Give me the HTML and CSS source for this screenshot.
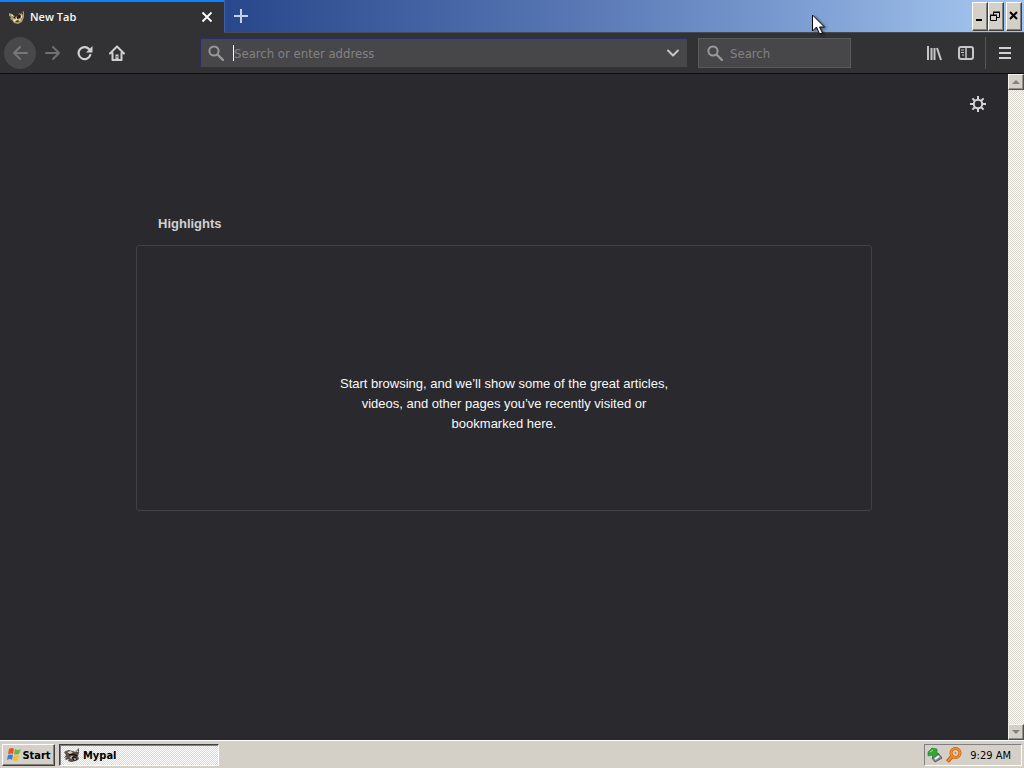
FILE: index.html
```html
<!DOCTYPE html>
<html lang="en">
<head>
<meta charset="utf-8">
<title>New Tab</title>
<link rel="stylesheet" href="styles.css">
</head>
<body>
<div class="desktop">
  <header class="titlebar">
    <div class="tab">
      <svg class="icon16" viewBox="0 0 16 16"><path fill="#b09a68" d="M0 4l3 1 3 3 3-1 1-3 2 1 2-3 1 1v5l-2 5-4 2-4-1-2-3-2-1 1-2-2-1z"/><path fill="#1d1c1a" d="M3 7l3 1 1 2-2-1zM8 8l2-3 2 2-1 2-3 1zM6 12l2-1 3 1-3 1zM13 4l1-1v3z"/><path fill="#fff0c8" d="M4 10l2 1 1-2 2 2 3-1-1 2-2-1-3 1-1 1zM2 5l2 1 1 2-2-1zM12 7l1-1v2l-1 1z"/></svg>
      <span class="tab-label">New Tab</span>
      <button class="tab-close" aria-label="Close tab"><svg class="icon16" viewBox="0 0 16 16"><path d="M3.500 3.500l9 9m0-9l-9 9" stroke="#fff" stroke-width="1.800" fill="none"/></svg></button>
    </div>
    <button class="new-tab" aria-label="Open a new tab"><svg class="icon16" viewBox="0 0 16 16"><path d="M8 1v14M1 8h14" stroke="#c2d2ee" stroke-width="2"/></svg></button>
    <div class="window-buttons">
      <button class="win-btn" aria-label="Minimize"><svg viewBox="0 0 12 12"><path d="M2 9h6" stroke="#000" stroke-width="2"/></svg></button>
      <button class="win-btn" aria-label="Restore"><svg viewBox="0 0 12 12"><path d="M3.500 4V1.500h6v5H7M3 1h7M.5 4.500h6v5h-6zM0 4h7" fill="none" stroke="#000"/></svg></button>
      <button class="win-btn win-close" aria-label="Close"><svg viewBox="0 0 12 12"><path d="M2 1l7 7m0-7L2 8" stroke="#000" stroke-width="2"/></svg></button>
    </div>
  </header>
  <nav class="toolbar">
    <div class="nav-buttons">
      <button class="tool back" aria-label="Back"><svg class="icon16" viewBox="0 0 16 16"><path d="M15 8H2m6-6L2 8l6 6" fill="none" stroke="#77777a" stroke-width="2" stroke-linecap="round" stroke-linejoin="round"/></svg></button>
      <button class="tool" aria-label="Forward"><svg class="icon16" viewBox="0 0 16 16"><path d="M1 8h13M8 2l6 6-6 6" fill="none" stroke="#707073" stroke-width="2" stroke-linecap="round" stroke-linejoin="round"/></svg></button>
      <button class="tool" aria-label="Reload"><svg class="icon16" viewBox="0 0 16 16"><path d="M13.300 10A6 6 0 1 1 12 4" fill="none" stroke="#d0d0d2" stroke-width="2.200" stroke-linecap="round"/><path d="M15.500 1v6.500H9z" fill="#d0d0d2"/></svg></button>
      <button class="tool" aria-label="Home"><svg class="icon16" viewBox="0 0 16 16"><path d="M1 8.500l7-7 7 7M3.500 8v7h9V8" fill="none" stroke="#d0d0d2" stroke-width="2" stroke-linecap="round" stroke-linejoin="round"/><path d="M6.500 15V9.500h3V15z" fill="#d0d0d2"/><path d="M8 11v1.500" stroke="#323234"/></svg></button>
    </div>
    <div class="field address">
      <svg class="icon16" viewBox="0 0 16 16"><circle cx="6" cy="6" r="4.600" fill="none" stroke="#98989a" stroke-width="2"/><path d="M9.500 9.500l5.500 5.500" stroke="#98989a" stroke-width="2.400" stroke-linecap="round"/></svg>
      <span class="caret"></span>
      <input type="text" placeholder="Search or enter address" aria-label="Search or enter address">
      <button class="drop" aria-label="Show history"><svg class="icon16" viewBox="0 0 16 16"><path d="M3 5.500l5 5 5-5" fill="none" stroke="#c6c6c8" stroke-width="2" stroke-linecap="round" stroke-linejoin="round"/></svg></button>
    </div>
    <div class="field search">
      <svg class="icon16" viewBox="0 0 16 16"><circle cx="6" cy="6" r="4.600" fill="none" stroke="#98989a" stroke-width="2"/><path d="M9.500 9.500l5.500 5.500" stroke="#98989a" stroke-width="2.400" stroke-linecap="round"/></svg>
      <input type="text" placeholder="Search" aria-label="Search">
    </div>
    <div class="end-buttons">
      <button class="tool" aria-label="Library"><svg class="icon16" viewBox="0 0 16 16"><path d="M2 1v14M5.500 3v12M8.500 3v12M11 3l4 12" fill="none" stroke="#c6c6c8" stroke-width="2"/></svg></button>
      <button class="tool" aria-label="Sidebars"><svg class="icon16" viewBox="0 0 16 16"><rect x="1" y="2" width="14" height="12" rx="2" fill="none" stroke="#c6c6c8" stroke-width="2"/><path d="M8 2v12" stroke="#c6c6c8" stroke-width="1.500"/><path d="M3 5h3M3 7.500h3M4 10h2" stroke="#c6c6c8"/></svg></button>
      <span class="divider"></span>
      <button class="tool" aria-label="Open menu"><svg class="icon16" viewBox="0 0 16 16"><path d="M2 3h12M2 8h12M2 13h12" stroke="#d0d0d2" stroke-width="2"/></svg></button>
    </div>
  </nav>
  <div class="viewport">
    <main class="page">
      <button class="settings" aria-label="Customize your New Tab page"><svg class="icon16" viewBox="0 0 16 16"><circle cx="8" cy="8" r="4.200" fill="none" stroke="#d4d4d7" stroke-width="2"/><path d="M8 0v4M8 12v4M0 8h4M12 8h4M2.400 2.400l2.600 2.600M11 11l2.600 2.600M2.400 13.600L5 11M11 5l2.600-2.600" stroke="#d4d4d7" stroke-width="2"/></svg></button>
      <section class="highlights">
        <h1>Highlights</h1>
        <div class="empty"><p>Start browsing, and we’ll show some of the great articles, videos, and other pages you’ve recently visited or bookmarked here.</p></div>
      </section>
    </main>
    <div class="scrollbar">
      <button class="scroll-btn" aria-label="Scroll up"><svg viewBox="0 0 10 10"><path d="M1 7l4-4 4 4z" fill="#858178"/></svg></button>
      <button class="scroll-btn" aria-label="Scroll down"><svg viewBox="0 0 10 10"><path d="M1 3h8L5 7z" fill="#858178"/></svg></button>
    </div>
  </div>
  <footer class="taskbar">
    <button class="start"><svg class="icon16" viewBox="0 0 16 16"><path d="M3 2q3-2 5 0L7 7q-2-1-5 0z" fill="#e4572c"/><path d="M9 2q3 2 6 0l-2 5q-3 1-5 0z" fill="#72b73c"/><path d="M2 8q3-1 5 0l-1 5q-2-2-5 0z" fill="#3e7bd6"/><path d="M8 8q3 1 5 0l-1 5q-3 2-5 0z" fill="#f3c12d"/></svg>Start</button>
    <button class="task"><svg class="icon16" viewBox="0 0 16 16"><path fill="#5a5048" d="M0 5l4-2 5 1 2 1 4-4v5l-1 3 1 3-3 2-5 1-3-1 1-2-3 1-1-1 2-2-3 1 2-3z"/><path fill="#d9cfc0" d="M3 5l4-1 2 2-3 1zM6 10l2-1 1 1-2 2zM12 5l2-2v2z"/><path d="M5 8l4-1 4 2M8 11l2-1 2 1M9 13l4-1" fill="none" stroke="#1b1714" stroke-width="1.500"/><path d="M10 12h2" stroke="#fff"/></svg>Mypal</button>
    <div class="tray">
      <svg class="icon16" viewBox="0 0 16 16"><path d="M5 11l6-5 4 5-7 4z" fill="#8b9096" stroke="#55595c"/><path d="M8 12l4-3" stroke="#f5f5f5" stroke-width="2"/><path d="M1 5l4-4 5 1v4l2 1-6 4-1-3-4 1z" fill="#35a635" stroke="#168020" stroke-width=".6"/><path d="M3 5l3-2" stroke="#a0e391"/></svg>
      <svg class="icon16 orange" viewBox="0 0 16 16"><circle cx="9.500" cy="6" r="4.500" fill="none" stroke="#b75512" stroke-width="3"/><path d="M6 9.500L1.500 14.500" stroke="#b75512" stroke-width="4"/><circle cx="9.500" cy="6" r="4.500" fill="none" stroke="#f58a24" stroke-width="2"/><path d="M6 9.500L2 14" stroke="#f58a24" stroke-width="2.200"/><circle cx="9.500" cy="6" r="1" fill="#e57b21"/></svg>
      <time>9:29 AM</time>
    </div>
  </footer>
  <svg class="cursor" viewBox="0 0 13 21"><path d="M.5 1v16l4-4 3 7 3-1-3-6h5z" fill="#fff" stroke="#000"/></svg>
</div>
</body>
</html>
```
FILE: styles.css
```css
* { box-sizing: border-box; }
body { margin: 0; }
button { font: inherit; padding: 0; border: 0; background: none; color: inherit; display: flex; align-items: center; justify-content: center; }
svg { display: block; flex: none; }
.icon16 { width: 16px; height: 16px; }
.desktop { min-height: 100vh; display: flex; flex-direction: column; background: #2a2a2e; font-family: "DejaVu Sans Condensed", "DejaVu Sans", sans-serif; font-size: 11px; position: relative; }
.titlebar { height: 33px; display: flex; background: linear-gradient(90deg, #1b3a80 0%, #2b4a8e 24%, #5675b2 55%, #7899cf 76%, #9cbee8 94%, #a3c5f2 100%); border-bottom: 1px solid #454a55; }
.tab { width: 224px; height: 33px; border-top: 2px solid #0a84ff; background: #323234; display: flex; align-items: center; padding: 0 9px 2px; color: #f9f9fa; }
.tab-label { font-family: "Open Sans", "Noto Sans", sans-serif; font-weight: 600; margin-left: 5px; flex: 1; }
.new-tab { width: 33px; height: 32px; border-left: 1px solid #3e60a8; }
.window-buttons { margin-left: auto; display: flex; padding: 2px 2px 2px 0; }
.win-btn { width: 16px; height: 29px; background: #d4d0c8; border: 1px solid; border-color: #fff #404040 #404040 #fff; box-shadow: inset -1px -1px #808080; }
.win-btn svg { width: 12px; height: 12px; }
.win-close { margin-left: 2px; }
.toolbar { height: 41px; background: #323234; border-bottom: 1px solid #0c0c0d; display: flex; align-items: center; padding: 0 3px 0 4px; }
.nav-buttons { display: flex; width: 196px; flex: none; }
.tool { width: 32px; height: 32px; }
.back { border-radius: 50%; background: #48484b; margin-right: 1px; }
.field { height: 30px; background: #474749; border: 1px solid #5a5a5d; display: flex; align-items: center; padding: 0 7px; font-size: 13px; }
.address { flex: 1; border-color: #2b2d68; margin-right: 10px; padding-right: 6px; }
.search { width: 153px; padding: 0 8px; }
.caret { width: 1px; height: 16px; margin-left: 9px; background: #fff; flex: none; }
.field input { min-width: 0; flex: 1; border: 0; outline: 0; padding: 0; background: none; font: inherit; color: #f9f9fa; }
.search input { margin-left: 7px; }
.field input::placeholder { color: #828285; opacity: 1; }
.end-buttons { display: flex; align-items: center; width: 170px; justify-content: flex-end; }
.divider { width: 1px; height: 32px; background: #555558; margin: 0 3px; }
.viewport { flex: 1; display: flex; }
.page { flex: 1; padding: 14px 14px 24px; font-family: "Liberation Sans", Arial, sans-serif; }
.settings { width: 32px; height: 32px; margin-left: auto; }
.highlights { width: 736px; max-width: 100%; margin: 94px auto 0; }
.highlights h1 { margin: 0; padding-left: 22px; color: #d0d0d3; font-size: 13px; line-height: 20px; }
.empty { min-height: 266px; margin-top: 11px; border: 1px solid #414145; border-radius: 3px; display: flex; align-items: center; justify-content: center; padding-top: 52px; color: #f9f9fa; font-size: 13px; line-height: 20px; text-align: center; }
.empty p { margin: 0; max-width: 344px; }
.scrollbar { width: 16px; background: repeating-conic-gradient(#fff 0 25%, #d9d5cd 0 50%) 0 0 / 2px 2px; display: flex; flex-direction: column; justify-content: space-between; }
.scroll-btn { width: 16px; height: 16px; background: #d4d0c8; border: 1px solid; border-color: #f4f2ed #505050 #505050 #f4f2ed; box-shadow: inset -1px -1px #929088; }
.scroll-btn svg { width: 10px; height: 10px; }
.taskbar { height: 28px; border-top: 1px solid #fff; background: #d4d0c8; display: flex; align-items: center; padding: 1px 2px 0; color: #000; }
.start, .task { height: 22px; font-weight: bold; border: 1px solid; }
.start { width: 53px; border-color: #fff #404040 #404040 #fff; box-shadow: inset -1px -1px #808080; }
.task { width: 160px; margin-left: 4px; padding-left: 4px; justify-content: flex-start; gap: 3px; border-color: #404040 #fff #fff #404040; box-shadow: inset 1px 1px #808080; background: repeating-conic-gradient(#fff 0 25%, #dcd8d0 0 50%) 0 0 / 2px 2px; }
.tray { height: 22px; margin-left: auto; display: flex; align-items: center; border: 1px solid; border-color: #808080 #fff #fff #808080; padding: 0 10px 0 2px; }
.orange { margin-left: 3px; }
.tray time { margin-left: 8px; }
.cursor { position: absolute; left: 812px; top: 14px; width: 13px; height: 21px; filter: drop-shadow(2px 1px 1px #0006); }
```
